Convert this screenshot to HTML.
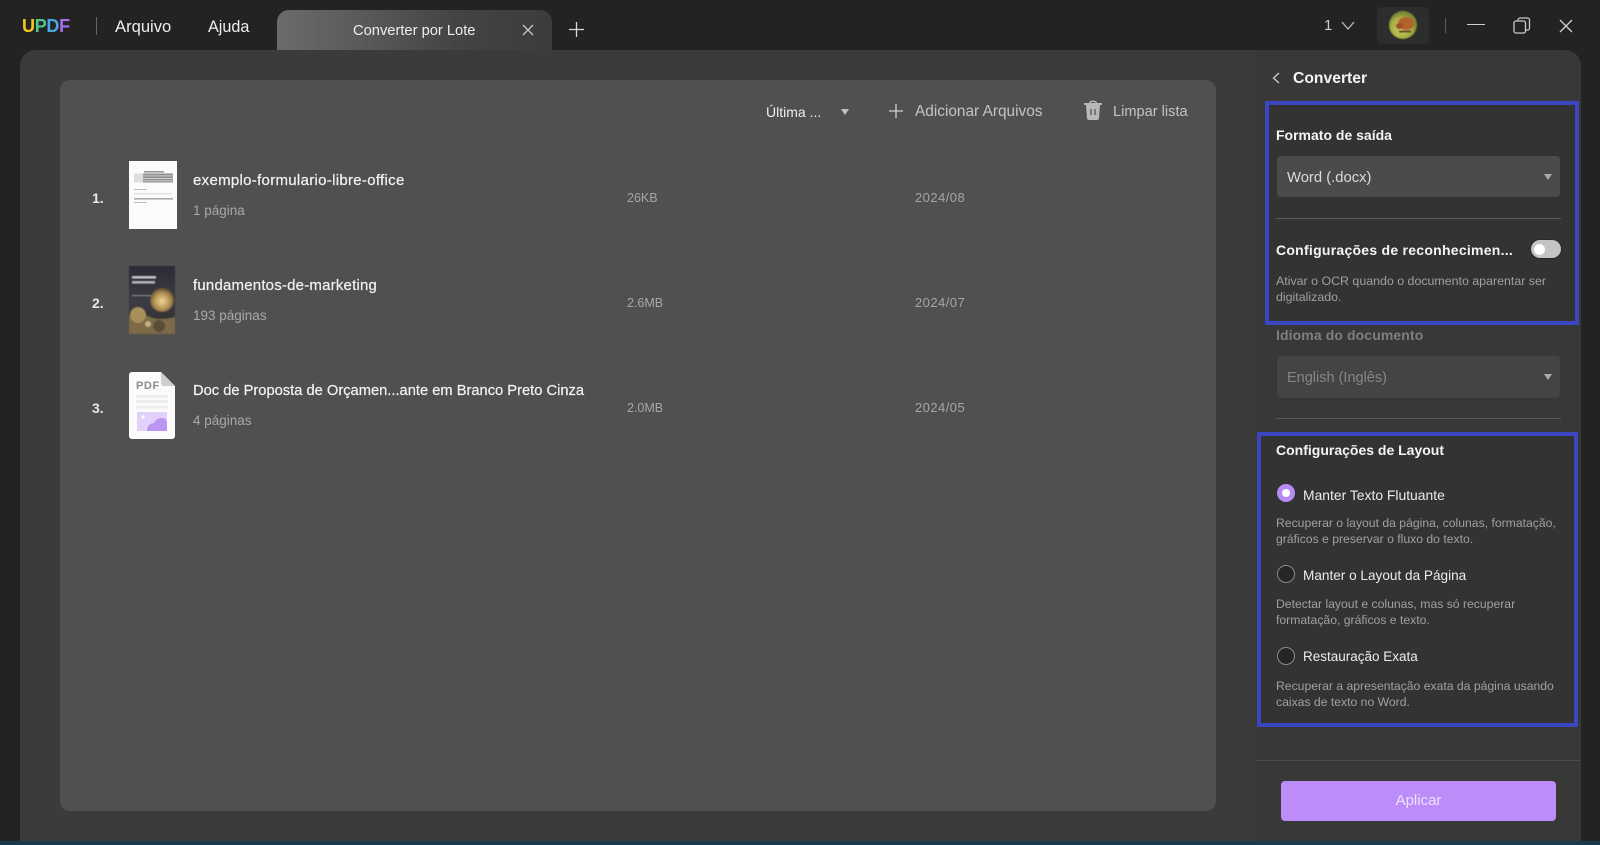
<!DOCTYPE html>
<html lang="pt"><head><meta charset="utf-8"><title>UPDF - Converter por Lote</title>
<style>
*{box-sizing:border-box;margin:0;padding:0}
html,body{width:1600px;height:845px;overflow:hidden;background:#232323}
body{position:relative;font-family:"Liberation Sans","DejaVu Sans",sans-serif;color:#eee}
.a{position:absolute}
.t{position:absolute;white-space:nowrap;line-height:20px;height:20px;margin-top:-10px}
.b{font-weight:bold}
svg{position:absolute;overflow:visible}
.name{font-size:15px;color:#f2f2f2;-webkit-text-stroke:.2px #f2f2f2}
.sub{font-size:13.5px;color:#a8a8a8}
.meta{font-size:12.5px;color:#a6a6a6}
.date{font-size:13px;color:#a6a6a6;letter-spacing:.45px}
.num{font-size:14px;color:#e8e8e8;font-weight:bold}
.h{font-size:14px;font-weight:bold;color:#f5f5f5}
.d{font-size:12.2px;color:#a0a0a0}
.r{font-size:13.6px;color:#ececec}
.radio{position:absolute;left:1277px;width:18px;height:18px;border-radius:50%;border:1.5px solid #8a8a8a;background:#262626}
.sel{position:absolute;left:1277px;width:283px;border-radius:4px}
.div{position:absolute;height:1px;background:#5a5a5a}
.blue{position:absolute;border:4px solid #3c46bf;background:#333}
.arrow{position:absolute;width:0;height:0;border-left:4.5px solid transparent;border-right:4.5px solid transparent;border-top:6px solid #aaa}
</style></head><body>

<!-- title bar -->
<div class="t b" style="left:22px;top:26px;font-size:18px;letter-spacing:-.3px"><span style="color:#f4c51d">U</span><span style="color:#4cc98f">P</span><span style="color:#4ba6e2">D</span><span style="color:#a36ff0">F</span></div>
<div class="a" style="left:96px;top:17px;width:1px;height:18px;background:#666"></div>
<div class="t" style="left:115px;top:27px;font-size:16.6px;color:#eee">Arquivo</div>
<div class="t" style="left:208px;top:27px;font-size:16.2px;color:#eee">Ajuda</div>

<div class="a" style="left:277px;top:10px;width:275px;height:45px;border-radius:12px 12px 0 0;background:linear-gradient(90deg,#6b6b6b 0%,#5a5a5a 30%,#444 65%,#3c3c3c 100%)"></div>
<div class="t" style="left:353px;top:31px;font-size:14.7px;color:#eee">Converter por Lote</div>
<svg style="left:522px;top:24px" width="12" height="12" viewBox="0 0 12 12"><path d="M1 1L11 11M11 1L1 11" stroke="#c8c8c8" stroke-width="1.3" fill="none"/></svg>
<svg style="left:569px;top:22px" width="15" height="15" viewBox="0 0 15 15"><path d="M7.5 0V15M0 7.5H15" stroke="#d8d8d8" stroke-width="1.3" fill="none"/></svg>

<div class="t" style="left:1324px;top:26px;font-size:15px;color:#ccc">1</div>
<svg style="left:1341px;top:21px" width="14" height="9" viewBox="0 0 14 9"><path d="M1 1L7 8L13 1" stroke="#bbb" stroke-width="1.3" fill="none"/></svg>
<div class="a" style="left:1377px;top:7px;width:52px;height:37px;border-radius:5px;background:#2d2d2d"></div>
<svg style="left:1389px;top:11px;filter:blur(.4px)" width="28" height="28" viewBox="0 0 28 28">
<defs><radialGradient id="av" cx=".45" cy=".6"><stop offset="0" stop-color="#d3d06a"/><stop offset=".75" stop-color="#a8ae42"/><stop offset="1" stop-color="#7d8a34"/></radialGradient></defs>
<circle cx="14" cy="14" r="14" fill="url(#av)"/>
<ellipse cx="17" cy="12.5" rx="8" ry="6.5" fill="#b4622c"/><ellipse cx="10.5" cy="15" rx="3.6" ry="3" fill="#9c5226"/><path d="M10 20.5h12" stroke="#4a3a1c" stroke-width="1.6"/></svg>
<div class="a" style="left:1445px;top:18px;width:1px;height:15px;background:#5c5c5c"></div>
<div class="a" style="left:1467px;top:24px;width:18px;height:1.3px;background:#d0d0d0"></div>
<svg style="left:1513px;top:17px" width="18" height="17" viewBox="0 0 18 17"><rect x="1" y="4" width="11.5" height="12" rx="2" fill="none" stroke="#c8c8c8" stroke-width="1.3"/><path d="M5 4V3a2 2 0 0 1 2-2h7.5a2 2 0 0 1 2 2v8a2 2 0 0 1-2 2h-2" fill="none" stroke="#c8c8c8" stroke-width="1.3"/></svg>
<svg style="left:1559px;top:19px" width="14" height="14" viewBox="0 0 14 14"><path d="M1 1L13 13M13 1L1 13" stroke="#d0d0d0" stroke-width="1.3" fill="none"/></svg>

<!-- main shell -->
<div class="a" style="left:20px;top:50px;width:1561px;height:791px;border-radius:16px 16px 0 0;background:#3b3b3b"></div>
<div class="a" style="left:1256px;top:50px;width:325px;height:791px;border-radius:0 16px 0 0;background:#383838"></div>
<div class="a" style="left:0;top:841px;width:1600px;height:4px;background:#1c3a4d"></div>

<!-- file card -->
<div class="a" style="left:60px;top:80px;width:1155.5px;height:731px;border-radius:10px;background:#505050"></div>

<div class="t" style="left:766px;top:112px;font-size:14px;color:#eee">Última ...</div>
<div class="arrow" style="left:841px;top:109px;border-top-color:#c0c0c0"></div>
<svg style="left:889px;top:104px" width="14" height="14" viewBox="0 0 14 14"><path d="M7 0V14M0 7H14" stroke="#d0d0d0" stroke-width="1.3" fill="none"/></svg>
<div class="t" style="left:915px;top:112px;font-size:15.4px;color:#c4c4c4">Adicionar Arquivos</div>
<svg style="left:1083px;top:99px" width="20" height="22" viewBox="0 0 20 22"><path d="M1 5H19" stroke="#b8b8b8" stroke-width="2"/><path d="M6.5 4.5C6.5 1.5 13.5 1.5 13.5 4.5" stroke="#b8b8b8" stroke-width="1.5" fill="none"/><path d="M3 6H17L16 19.5a2 2 0 0 1-2 1.5H6a2 2 0 0 1-2-1.5z" fill="#b8b8b8"/><path d="M8 10V16M12 10V16" stroke="#666" stroke-width="1.6"/></svg>
<div class="t" style="left:1113px;top:112px;font-size:14.6px;color:#c4c4c4">Limpar lista</div>

<!-- row 1 -->
<div class="t num" style="left:92px;top:198px">1.</div>
<svg style="left:129px;top:161px;filter:blur(.35px)" width="48" height="68" viewBox="0 0 48 68">
<rect width="48" height="68" fill="#fbfbfb"/>
<rect x="15" y="10" width="20" height="1.6" fill="#999"/>
<rect x="5" y="12.5" width="39" height="9" fill="#8f8f8f"/><rect x="5" y="12.5" width="9" height="9" fill="#ddd"/>
<rect x="14" y="14.5" width="30" height=".8" fill="#ddd"/><rect x="14" y="17" width="30" height=".8" fill="#ddd"/><rect x="14" y="19.5" width="30" height=".8" fill="#ddd"/>
<rect x="5" y="28" width="13" height="1" fill="#bbb"/><rect x="5" y="32.5" width="38" height=".8" fill="#ccc"/>
<rect x="5" y="37" width="39" height="1.6" fill="#aaa"/><rect x="5" y="41" width="13" height="1" fill="#bbb"/>
</svg>
<div class="t name" style="left:193px;top:181px;letter-spacing:.3px">exemplo-formulario-libre-office</div>
<div class="t sub" style="left:193px;top:211px">1 página</div>
<div class="t meta" style="left:627px;top:198px">26KB</div>
<div class="t date" style="left:915px;top:198px">2024/08</div>

<!-- row 2 -->
<div class="t num" style="left:92px;top:303px">2.</div>
<svg style="left:129px;top:266px;filter:blur(.5px)" width="46" height="68" viewBox="0 0 46 68">
<defs><linearGradient id="c" x1="0" y1="0" x2="0" y2="1"><stop offset="0" stop-color="#2c2c38"/><stop offset=".55" stop-color="#3c3c44"/><stop offset="1" stop-color="#2a2620"/></linearGradient>
<radialGradient id="g" cx=".5" cy=".55"><stop offset="0" stop-color="#f0d596"/><stop offset=".7" stop-color="#b08e52"/><stop offset="1" stop-color="#6f5a38"/></radialGradient></defs>
<rect width="46" height="68" fill="url(#c)"/>
<rect x="3" y="10" width="24" height="2.6" fill="#c4c4c4"/><rect x="3" y="15" width="23" height="2.6" fill="#b4b4b4"/>
<rect x="3" y="29" width="20" height="1.2" fill="#888"/>
<circle cx="33" cy="34" r="12" fill="url(#g)"/>
<path d="M0 68V50c8-6 14-3 19 0s14 4 27 1v17z" fill="#7c6a48"/><circle cx="9" cy="49" r="8" fill="#a8905a"/><circle cx="30" cy="60" r="6" fill="#5a4d38"/><circle cx="19" cy="58" r="3" fill="#c9b27a"/>
</svg>
<div class="t name" style="left:193px;top:286px;letter-spacing:.2px">fundamentos-de-marketing</div>
<div class="t sub" style="left:193px;top:316px">193 páginas</div>
<div class="t meta" style="left:627px;top:303px">2.6MB</div>
<div class="t date" style="left:915px;top:303px">2024/07</div>

<!-- row 3 -->
<div class="t num" style="left:92px;top:408px">3.</div>
<svg style="left:129px;top:372px" width="46" height="67" viewBox="0 0 46 67">
<path d="M3 0H32L46 14V64a3 3 0 0 1-3 3H3a3 3 0 0 1-3-3V3a3 3 0 0 1 3-3z" fill="#fbfbfb"/>
<path d="M32 0L46 14H35a3 3 0 0 1-3-3z" fill="#cfcfcf"/>
<text x="7" y="17" font-family="Liberation Sans,sans-serif" font-weight="bold" font-size="11" fill="#8c8c8c" letter-spacing=".6">PDF</text>
<rect x="7" y="23" width="32" height="3" fill="#eee"/><rect x="7" y="28" width="32" height="3" fill="#eee"/><rect x="7" y="34" width="32" height="2.5" fill="#eee"/>
<rect x="8" y="40" width="30" height="19" fill="#e2d2fb"/><circle cx="14" cy="45" r="1.6" fill="#fff"/>
<path d="M18 59c0-6 4-8 7-8 2-4 5-5 8-5 3 0 5 2 5 5v8z" fill="#b896f2"/>
</svg>
<div class="t name" style="left:193px;top:391px;font-size:14.7px">Doc de Proposta de Orçamen...ante em Branco Preto Cinza</div>
<div class="t sub" style="left:193px;top:421px">4 páginas</div>
<div class="t meta" style="left:627px;top:408px">2.0MB</div>
<div class="t date" style="left:915px;top:408px">2024/05</div>

<!-- sidebar -->
<svg style="left:1272px;top:72px" width="8" height="12" viewBox="0 0 8 12"><path d="M7 1L1.5 6L7 11" stroke="#c8c8c8" stroke-width="1.4" fill="none"/></svg>
<div class="t b" style="left:1293px;top:79px;font-size:15.7px;color:#f5f5f5">Converter</div>

<div class="blue" style="left:1265px;top:101px;width:314px;height:224px"></div>
<div class="t h" style="left:1276px;top:135px">Formato de saída</div>
<div class="sel" style="top:156px;height:41px;background:#4b4b4b"></div>
<div class="t" style="left:1287px;top:178px;font-size:14.8px;color:#dcdcdc">Word (.docx)</div>
<div class="arrow" style="left:1544px;top:174px"></div>
<div class="div" style="left:1276px;top:218px;width:285px"></div>
<div class="t h" style="left:1276px;top:250px;letter-spacing:.26px">Configurações de reconhecimen...</div>
<div class="a" style="left:1531px;top:240px;width:30px;height:18px;border-radius:9px;background:#c4c4c4;box-shadow:0 0 0 1px #2a2a2a"></div>
<div class="a" style="left:1534px;top:243.5px;width:11px;height:11px;border-radius:50%;background:#fff"></div>
<div class="t d" style="left:1276px;top:281px;font-size:12.4px">Ativar o OCR quando o documento aparentar ser</div>
<div class="t d" style="left:1276px;top:297px;font-size:12.4px">digitalizado.</div>

<div class="t h" style="left:1276px;top:335px;color:#7f7f7f;letter-spacing:.1px">Idioma do documento</div>
<div class="sel" style="top:356px;height:42px;background:#444"></div>
<div class="t" style="left:1287px;top:378px;font-size:14.5px;color:#868686">English (Inglês)</div>
<div class="arrow" style="left:1544px;top:374px"></div>
<div class="div" style="left:1276px;top:418px;width:285px"></div>

<div class="blue" style="left:1257px;top:432px;width:321px;height:295px"></div>
<div class="t h" style="left:1276px;top:450px">Configurações de Layout</div>

<div class="radio" style="top:484px;background:#b68cf4;border:0"></div>
<div class="a" style="left:1282px;top:489px;width:8px;height:8px;border-radius:50%;background:#fff"></div>
<div class="t r" style="left:1303px;top:495px;font-size:13.9px">Manter Texto Flutuante</div>
<div class="t d" style="left:1276px;top:523px">Recuperar o layout da página, colunas, formatação,</div>
<div class="t d" style="left:1276px;top:539px">gráficos e preservar o fluxo do texto.</div>

<div class="radio" style="top:565px"></div>
<div class="t r" style="left:1303px;top:576px">Manter o Layout da Página</div>
<div class="t d" style="left:1276px;top:604px">Detectar layout e colunas, mas só recuperar</div>
<div class="t d" style="left:1276px;top:620px">formatação, gráficos e texto.</div>

<div class="radio" style="top:647px"></div>
<div class="t r" style="left:1303px;top:657px;font-size:13.5px">Restauração Exata</div>
<div class="t d" style="left:1276px;top:686px">Recuperar a apresentação exata da página usando</div>
<div class="t d" style="left:1276px;top:702px">caixas de texto no Word.</div>

<div class="div" style="left:1256px;top:760px;width:325px;background:#4c4c4c"></div>
<div class="a" style="left:1281px;top:781px;width:275px;height:40px;border-radius:4px;background:#bc8cf8"></div>
<div class="t" style="left:1281px;width:275px;text-align:center;top:801px;font-size:15px;color:#ece0fb">Aplicar</div>
</body></html>
